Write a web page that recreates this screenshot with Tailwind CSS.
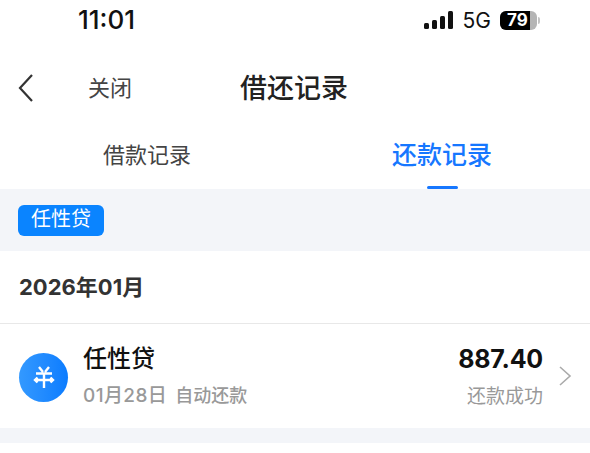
<!DOCTYPE html>
<html lang="zh"><head><meta charset="utf-8"><script src="https://cdn.jsdelivr.net/npm/@tailwindcss/browser@4"></script></head>
<body class="bg-white">
<div class="w-[590px] h-[453px] overflow-hidden bg-white flex flex-col font-['Inter','Noto_Sans_CJK_SC',sans-serif]">
  <div class="h-[40px] flex items-center justify-between pl-[78px] pr-[50px] shrink-0">
    <span class="text-[26px] font-medium text-[#111] font-['Inter',sans-serif] leading-none">11:01</span>
    <div class="flex items-center">
      <svg width="31" height="20" viewBox="0 0 31 20" class="block"><rect x="0" y="13" width="5" height="6" rx="1.5" fill="#111"/><rect x="8" y="10" width="5" height="9" rx="1.5" fill="#111"/><rect x="16" y="6" width="5" height="13" rx="1.5" fill="#111"/><rect x="24" y="1" width="5" height="18" rx="1.5" fill="#111"/></svg>
      <span class="ml-[8px] text-[21px] text-[#111] leading-none">5G</span>
      <div class="ml-[9px] w-[37px] h-[19px] rounded-[6px] bg-[#b5b5b5] overflow-hidden relative">
        <div class="w-[30px] h-full bg-black flex items-center justify-center text-white text-[17px] font-bold leading-none pl-[5px]">79</div>
      </div>
      <div class="w-[2px] h-[7px] ml-[1px] rounded-r bg-[#c4c4c4]"></div>
    </div>
  </div>
  <div class="h-[96px] flex items-center shrink-0">
    <svg width="18" height="30" viewBox="0 0 18 30" class="ml-[17px]"><path d="M15 2 L3 15 L15 28" fill="none" stroke="#333" stroke-width="2.2"/></svg>
    <span class="ml-[53px] text-[22px] text-[#444] leading-none">关闭</span>
    <span class="ml-[108px] text-[27px] font-medium text-[#222] leading-none">借还记录</span>
  </div>
  <div class="h-[53px] flex shrink-0 relative">
    <div class="w-[295px] pt-[8px] pl-[103px] text-[22px] text-[#444] leading-none">借款记录</div>
    <div class="flex-1 pt-[7px] pl-[97px] text-[25px] font-medium text-[#1677ff] leading-none">还款记录</div>
    <div class="absolute left-[427px] bottom-0 w-[31px] h-[3px] rounded-full bg-[#1677ff]"></div>
  </div>
  <div class="h-[62px] bg-[#f3f5f9] shrink-0 pt-[16px] pl-[18px]">
    <div class="w-[86px] h-[31px] rounded-[6px] bg-[#0a84ff] text-white text-[20px] leading-[29px] text-center">任性贷</div>
  </div>
  <div class="h-[73px] shrink-0 px-[19px] flex items-center border-b border-[#e8e8e8]">
    <span class="text-[22px] font-bold text-[#333] leading-none">2026年01月</span>
  </div>
  <div class="h-[104px] shrink-0 flex items-center pl-[19px] pr-[18px]">
    <div class="w-[49px] h-[49px] rounded-full bg-gradient-to-r from-[#3399ff] to-[#0a7cff] flex items-center justify-center shrink-0 mt-[2px]">
      <svg width="22" height="24" viewBox="0 0 22 24"><path d="M6 2 L10 7 M16 2 L12 7 M3 8.5 H19 M2 15 H20 M11 8 V23 M4.5 12.5 L2 15 L4.5 17.5 M17.5 12.5 L20 15 L17.5 17.5" fill="none" stroke="#fff" stroke-width="2.4"/></svg>
    </div>
    <div class="ml-[15px] flex-1 flex flex-col">
      <span class="text-[24px] font-medium text-[#111] leading-none">任性贷</span>
      <div class="mt-[15px] flex items-center text-[#999] font-medium leading-none">
        <span class="text-[19px] tracking-[0.4px]">01月28日</span>
        <span class="ml-[8px] text-[18px]">自动还款</span>
      </div>
    </div>
    <div class="flex flex-col items-end">
      <span class="text-[25px] font-bold text-[#111] leading-none tracking-[-0.2px]">887.40</span>
      <span class="mt-[15px] text-[19px] text-[#999] leading-none">还款成功</span>
    </div>
    <svg width="14" height="22" viewBox="0 0 14 22" class="ml-[15px]"><path d="M2 2 L12 11 L2 20" fill="none" stroke="#aaa" stroke-width="1.6"/></svg>
  </div>
  <div class="h-[15px] bg-[#f3f5f9] shrink-0"></div>
  <div class="flex-1 bg-white"></div>
</div>
</body></html>
